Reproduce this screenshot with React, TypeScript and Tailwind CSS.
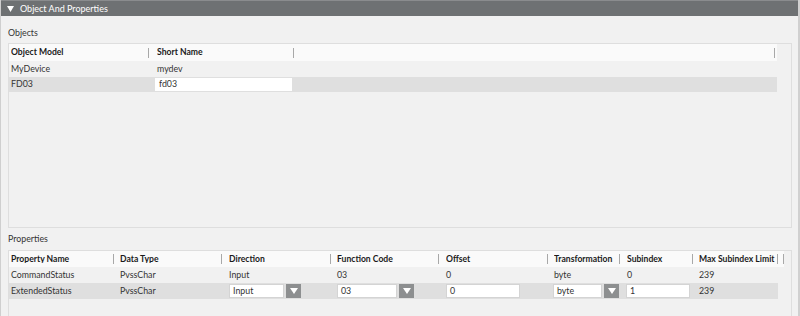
import React from "react";

const font = { fontFamily: "Lato, 'Noto Sans', 'Liberation Sans', sans-serif" };

function Sep() {
  return <div className="w-[1px] h-[10px] bg-[#a8a8a8] shrink-0" />;
}

function HCell({ w, pl, label, sep = true }: { w: string; pl: string; label: string; sep?: boolean }) {
  return (
    <div className={`${w} ${pl} flex items-center h-full shrink-0`}>
      <span className="flex-1 overflow-hidden whitespace-nowrap font-bold text-[#1a1a1a] text-[8.6px]">{label}</span>
      {sep && <Sep />}
    </div>
  );
}

function DropBtn() {
  return (
    <div className="w-[15px] h-[14px] bg-[#8d8f90] flex items-center justify-center shrink-0">
      <svg width="8" height="6" viewBox="0 0 8 6">
        <path d="M0 0 H8 L4 6 Z" fill="#ffffff" />
      </svg>
    </div>
  );
}

function Select({ value, w }: { value: string; w: string }) {
  return (
    <div className="flex items-center gap-[2px]">
      <div className={`${w} h-[14px] bg-white border border-[#d4d4d4] flex items-center pl-[3px] text-[#333]`}>{value}</div>
      <DropBtn />
    </div>
  );
}

function TextBox({ value, w }: { value: string; w: string }) {
  return (
    <div className={`${w} h-[14px] bg-white border border-[#d4d4d4] flex items-center pl-[3px] text-[#333]`}>{value}</div>
  );
}

export default function App() {
  return (
    <div className="w-[800px] h-[316px] bg-[#f1f1f1] overflow-hidden text-[8.8px] leading-none flex flex-col border-l border-[#cfcfcf] border-r-[2px] border-r-[#d0d0d0]" style={font}>
      {/* Title bar */}
      <div className="h-[16px] bg-[#6e7173] border-t border-[#8a8c8e] flex items-center pl-[6px] gap-[6px] text-white shrink-0">
        <svg width="7" height="6" viewBox="0 0 7 6">
          <path d="M0 0 H7 L3.5 6 Z" fill="#ffffff" />
        </svg>
        <span className="text-[9px]">Object And Properties</span>
      </div>

      {/* Objects */}
      <div className="h-[27px] flex items-end pb-[5px] pl-[7px] text-[#333] shrink-0">Objects</div>
      <div className="ml-[7px] w-[784px] h-[185px] border border-[#dedede] shrink-0 pt-0">
        <div className="w-[768px] h-[17px] bg-[#fafafa] flex items-center">
          <HCell w="w-[140px]" pl="pl-[2px]" label="Object Model" />
          <HCell w="w-[145px]" pl="pl-[8px]" label="Short Name" />
          <div className="flex-1 flex justify-end pr-[2px] items-center h-full"><Sep /></div>
        </div>
        <div className="w-[768px] h-[16px] flex items-center text-[#333]">
          <div className="w-[140px] pl-[2px]">MyDevice</div>
          <div className="w-[145px] pl-[8px]">mydev</div>
        </div>
        <div className="w-[768px] h-[15px] bg-[#dfdfdf] flex items-center text-[#333]">
          <div className="w-[140px] pl-[2px]">FD03</div>
          <div className="w-[145px] pl-[6px]">
            <div className="w-[137px] h-[13px] bg-white flex items-center pl-[4px]">fd03</div>
          </div>
        </div>
      </div>

      {/* Properties */}
      <div className="h-[17px] flex items-end pb-[1px] pl-[7px] text-[#333] shrink-0">Properties</div>
      <div className="ml-[7px] w-[784px] mt-[5px] flex-1 border border-[#dedede] border-b-0">
        <div className="w-[775px] h-[16px] bg-[#fafafa] flex items-center">
          <HCell w="w-[105px]" pl="pl-[2px]" label="Property Name" />
          <HCell w="w-[108px]" pl="pl-[6px]" label="Data Type" />
          <HCell w="w-[109px]" pl="pl-[7px]" label="Direction" />
          <HCell w="w-[108px]" pl="pl-[6px]" label="Function Code" />
          <HCell w="w-[109px]" pl="pl-[7px]" label="Offset" />
          <HCell w="w-[72px]" pl="pl-[6px]" label="Transformation" />
          <HCell w="w-[73px]" pl="pl-[7px]" label="Subindex" />
          <HCell w="w-[85px]" pl="pl-[6px]" label="Max Subindex Limit" />
          <div className="flex-1 flex justify-end pr-[0px] items-center h-full"><Sep /></div>
        </div>
        <div className="w-[769px] h-[16px] flex items-center text-[#333]">
          <div className="w-[105px] pl-[2px] shrink-0">CommandStatus</div>
          <div className="w-[108px] pl-[6px] shrink-0">PvssChar</div>
          <div className="w-[109px] pl-[7px] shrink-0">Input</div>
          <div className="w-[108px] pl-[6px] shrink-0">03</div>
          <div className="w-[109px] pl-[7px] shrink-0">0</div>
          <div className="w-[72px] pl-[6px] shrink-0">byte</div>
          <div className="w-[73px] pl-[7px] shrink-0">0</div>
          <div className="w-[85px] pl-[6px] shrink-0">239</div>
        </div>
        <div className="w-[769px] h-[16px] bg-[#dfdfdf] flex items-center text-[#333]">
          <div className="w-[105px] pl-[2px] shrink-0">ExtendedStatus</div>
          <div className="w-[108px] pl-[6px] shrink-0">PvssChar</div>
          <div className="w-[109px] pl-[7px] shrink-0"><Select value="Input" w="w-[55px]" /></div>
          <div className="w-[108px] pl-[6px] shrink-0"><Select value="03" w="w-[60px]" /></div>
          <div className="w-[109px] pl-[7px] shrink-0"><TextBox value="0" w="w-[74px]" /></div>
          <div className="w-[72px] pl-[5px] shrink-0"><Select value="byte" w="w-[49px]" /></div>
          <div className="w-[73px] pl-[6px] shrink-0"><TextBox value="1" w="w-[64px]" /></div>
          <div className="w-[85px] pl-[6px] shrink-0">239</div>
        </div>
      </div>
    </div>
  );
}
